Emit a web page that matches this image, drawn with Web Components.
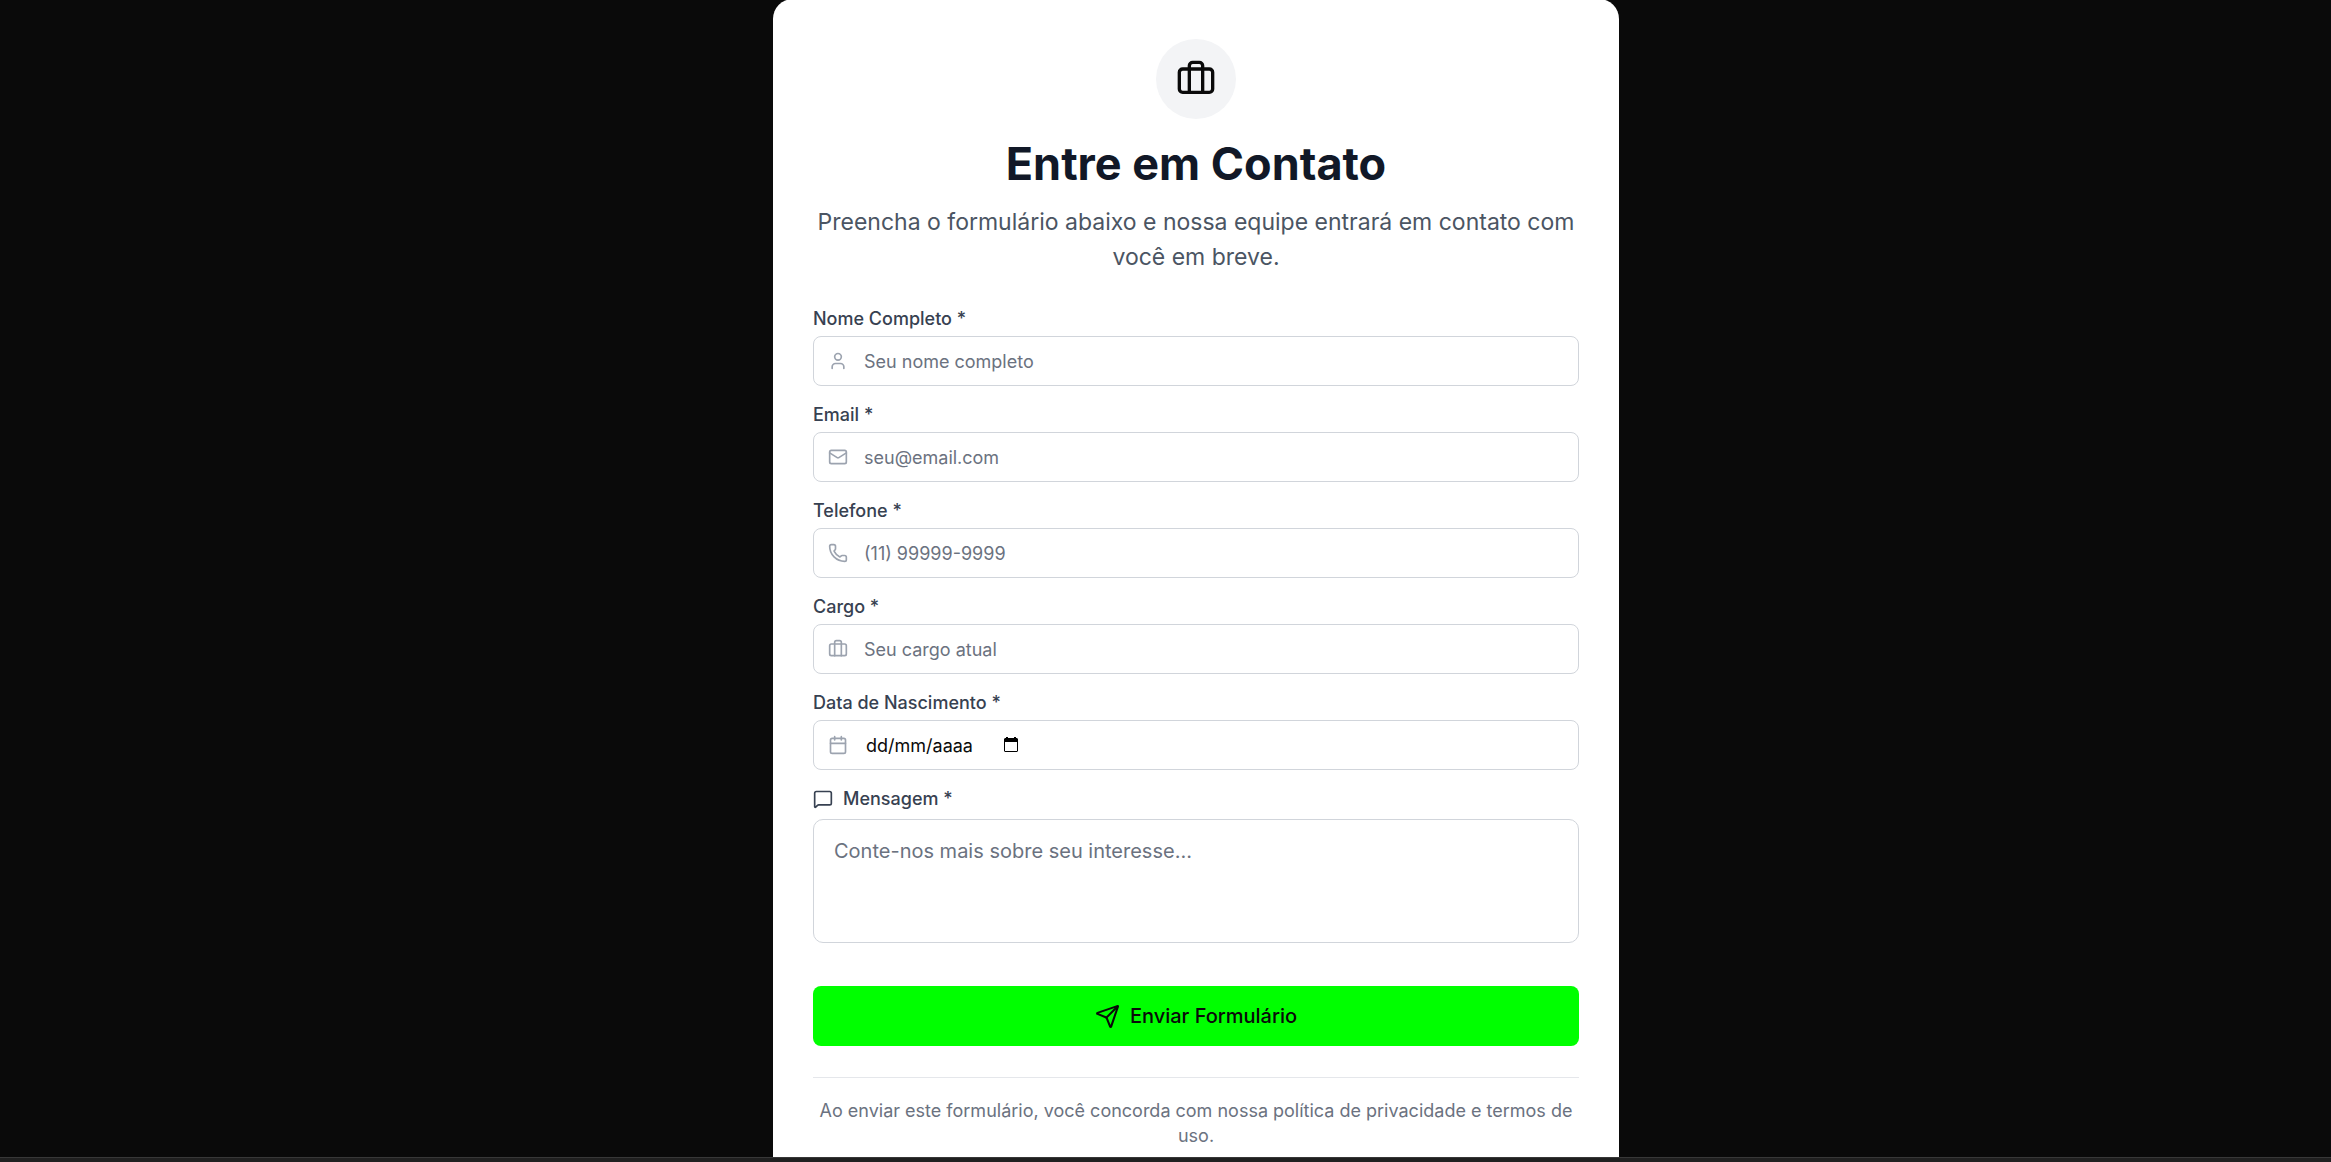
<!DOCTYPE html>
<html lang="pt-BR">
<head>
<meta charset="utf-8">
<meta name="viewport" content="width=device-width, initial-scale=1">
<title>Entre em Contato</title>
<style>
html, body { margin: 0; }
body { background: #0a0a0a; font-family: Inter, "Liberation Sans", sans-serif; font-size: 18px; line-height: 25px; }
</style>
</head>
<body>
<contact-page>
  <contact-card>
    <card-header icon="briefcase" heading="Entre em Contato">Preencha o formulário abaixo e nossa equipe entrará em contato com você em breve.</card-header>
    <contact-form></contact-form>
    <card-note>Ao enviar este formulário, você concorda com nossa política de privacidade e termos de uso.</card-note>
  </contact-card>
</contact-page>
<script>
const ICONS = {
  briefcase: '<path d="M16 20V4a2 2 0 0 0-2-2h-4a2 2 0 0 0-2 2v16"/><rect width="20" height="14" x="2" y="6" rx="2"/>',
  user: '<path d="M19 21v-2a4 4 0 0 0-4-4H9a4 4 0 0 0-4 4v2"/><circle cx="12" cy="7" r="4"/>',
  mail: '<path d="m22 7-8.991 5.727a2 2 0 0 1-2.009 0L2 7"/><rect x="2" y="4" width="20" height="16" rx="2"/>',
  phone: '<path d="M13.832 16.568a1 1 0 0 0 1.213-.303l.355-.465A2 2 0 0 1 17 15h3a2 2 0 0 1 2 2v3a2 2 0 0 1-2 2A18 18 0 0 1 2 4a2 2 0 0 1 2-2h3a2 2 0 0 1 2 2v3a2 2 0 0 1-.8 1.6l-.468.351a1 1 0 0 0-.292 1.233 14 14 0 0 0 6.392 6.384"/>',
  calendar: '<path d="M8 2v4M16 2v4M3 10h18"/><rect width="18" height="18" x="3" y="4" rx="2"/>',
  message: '<path d="M22 17a2 2 0 0 1-2 2H6.828a2 2 0 0 0-1.414.586l-2.202 2.202A.71.71 0 0 1 2 21.286V5a2 2 0 0 1 2-2h16a2 2 0 0 1 2 2z"/>',
  send: '<path d="M14.536 21.686a.5.5 0 0 0 .937-.024l6.5-19a.496.496 0 0 0-.635-.635l-19 6.5a.5.5 0 0 0-.024.937l7.93 3.18a2 2 0 0 1 1.112 1.11z"/><path d="m21.854 2.147-10.94 10.939"/>'
};

class BaseElement extends HTMLElement {
  connectedCallback() {
    if (!this.shadowRoot) this.attachShadow({ mode: 'open' }).innerHTML = this.render();
  }
}

customElements.define('line-icon', class extends BaseElement {
  render() {
    return `<style>
      :host { display: block; flex: none; width: 20px; height: 20px; }
      svg { display: block; width: 100%; height: 100%; fill: none; stroke: currentColor; stroke-width: 2; stroke-linecap: round; stroke-linejoin: round; }
    </style><svg viewBox="0 0 24 24" aria-hidden="true">${ICONS[this.getAttribute('name')]}</svg>`;
  }
});

customElements.define('contact-page', class extends BaseElement {
  render() {
    return `<style>
      :host { display: flex; flex-direction: column; height: 100vh; }
      main { flex: 1; min-height: 0; overflow: hidden; display: flex; justify-content: center; align-items: flex-start; padding-left: 61px; }
      footer { flex: none; box-sizing: border-box; height: 5px; background: #202020; border-top: 1px solid #383838; }
    </style><main><slot></slot></main><footer></footer>`;
  }
});

customElements.define('contact-card', class extends BaseElement {
  render() {
    return `<style>
      :host { display: block; box-sizing: border-box; width: 100%; max-width: 846px; margin-top: -1px; padding: 40px; background: #fff; border-radius: 20px; }
    </style><slot></slot>`;
  }
});

customElements.define('card-header', class extends BaseElement {
  render() {
    return `<style>
      :host { display: flex; flex-direction: column; align-items: center; text-align: center; margin-bottom: 31px; }
      .badge { display: flex; align-items: center; justify-content: center; width: 80px; height: 80px; border-radius: 50%; background: #f3f4f6; color: #0a0a0a; }
      line-icon { width: 40px; height: 40px; }
      h1 { margin: 20px 0 16px; font-size: 45px; line-height: 50px; font-weight: 700; color: #111827; }
      p { margin: 0; font-size: 23px; line-height: 35px; color: #4b5563; }
    </style>
    <div class="badge"><line-icon name="${this.getAttribute('icon')}"></line-icon></div>
    <h1>${this.getAttribute('heading')}</h1>
    <p><slot></slot></p>`;
  }
});

const FIELD_STYLE = `
  :host { display: flex; flex-direction: column; gap: 5px; }
  label { font-weight: 500; color: #374151; }
  .box { display: flex; align-items: center; gap: 16px; box-sizing: border-box; height: 50px; padding: 0 14px; border: 1px solid #d1d5db; border-radius: 8px; color: #9ca3af; }
  .box:focus-within { border-color: #0f0; }
  input { flex: 1; min-width: 0; margin: 0; padding: 0; border: 0; outline: 0; background: none; font: inherit; color: #0a0a0a; }
  input::placeholder { color: #6b7280; opacity: 1; }`;

customElements.define('text-field', class extends BaseElement {
  render() {
    const a = n => this.getAttribute(n);
    return `<style>${FIELD_STYLE}</style>
      <label for="control">${a('label')} *</label>
      <div class="box"><line-icon name="${a('icon')}"></line-icon><input id="control" type="${a('type')}" placeholder="${a('placeholder')}" required></div>`;
  }
});

customElements.define('date-field', class extends BaseElement {
  render() {
    return `<style>${FIELD_STYLE}
      input { flex: none; box-sizing: border-box; width: 121px; padding: 0 2px; }
      input::placeholder { color: #0a0a0a; }
      button { display: flex; margin: 0; padding: 2px; border: 0; background: none; color: #000; }
      button svg { width: 16px; height: 16px; fill: currentColor; }
    </style>
    <label for="control">${this.getAttribute('label')} *</label>
    <div class="box"><line-icon name="calendar"></line-icon><input id="control" type="text" inputmode="numeric" placeholder="dd/mm/aaaa" required>
      <button type="button" aria-label="Abrir calendário"><svg viewBox="0 0 16 16" aria-hidden="true"><path fill-rule="evenodd" d="M3 0h2v1h6V0h2v1h1l1 1v12l-1 1H2l-1-1V2l1-1h1zM2 5v9h12V5z"/></svg></button></div>`;
  }
});

customElements.define('message-field', class extends BaseElement {
  render() {
    return `<style>
      :host { display: flex; flex-direction: column; gap: 8px; }
      label { display: flex; align-items: center; gap: 10px; font-weight: 500; color: #374151; }
      textarea { display: block; box-sizing: border-box; width: 100%; height: 124px; margin: 0; padding: 16px 20px; border: 1px solid #d1d5db; border-radius: 10px; outline: 0; resize: none; background: #fff; font: inherit; font-size: 20px; line-height: 30px; color: #0a0a0a; }
      textarea::placeholder { color: #6b7280; opacity: 1; }
      textarea:focus { border-color: #0f0; }
    </style>
    <label for="control"><line-icon name="message"></line-icon><span>${this.getAttribute('label')} *</span></label>
    <textarea id="control" placeholder="${this.getAttribute('placeholder')}" required></textarea>`;
  }
});

customElements.define('submit-button', class extends BaseElement {
  render() {
    return `<style>
      :host { display: block; margin-top: 27px; }
      button { display: flex; align-items: center; justify-content: center; gap: 10px; width: 100%; height: 60px; margin: 0; padding: 0 20px; border: 0; border-radius: 8px; background: #0f0; color: #0a0a0a; font: inherit; font-size: 20px; font-weight: 500; cursor: pointer; }
      line-icon { width: 25px; height: 25px; }
    </style><button type="submit"><line-icon name="send"></line-icon><slot></slot></button>`;
  }
});

customElements.define('contact-form', class extends BaseElement {
  render() {
    return `<style>
      :host { display: block; }
      form { display: flex; flex-direction: column; gap: 16px; margin: 0; }
    </style>
    <form>
      <text-field label="Nome Completo" icon="user" type="text" placeholder="Seu nome completo"></text-field>
      <text-field label="Email" icon="mail" type="email" placeholder="seu@email.com"></text-field>
      <text-field label="Telefone" icon="phone" type="tel" placeholder="(11) 99999-9999"></text-field>
      <text-field label="Cargo" icon="briefcase" type="text" placeholder="Seu cargo atual"></text-field>
      <date-field label="Data de Nascimento"></date-field>
      <message-field label="Mensagem" placeholder="Conte-nos mais sobre seu interesse..."></message-field>
      <submit-button>Enviar Formulário</submit-button>
    </form>`;
  }
});

customElements.define('card-note', class extends BaseElement {
  render() {
    return `<style>
      :host { display: block; margin-top: 31px; padding-top: 20px; border-top: 1px solid #e5e7eb; text-align: center; color: #6b7280; }
      p { margin: 0; }
    </style><p><slot></slot></p>`;
  }
});
</script>
</body>
</html>
